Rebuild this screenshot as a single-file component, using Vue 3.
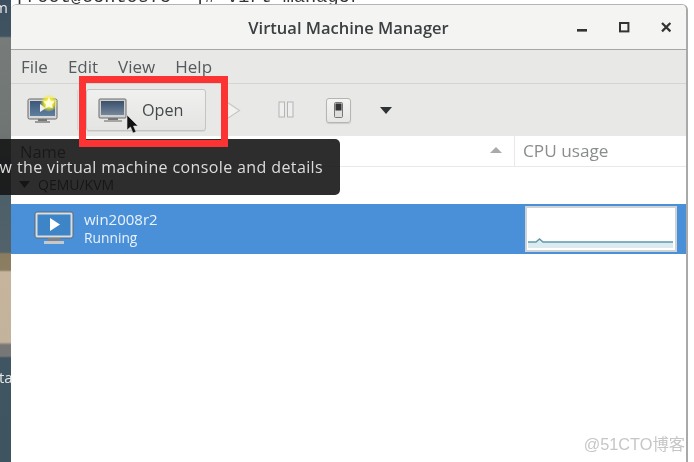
<script setup>
const menus = ['File', 'Edit', 'View', 'Help']
</script>

<template>
  <div class="desktop">
    <aside class="wallpaper">
      <span class="desk-label top">m</span>
      <span class="desk-label bottom">ta</span>
    </aside>
    <main class="center">
      <div class="terminal"><span>[root@centos75 ~]# virt-manager</span></div>
      <section class="window">
        <header class="titlebar">
          <span class="title">Virtual Machine Manager</span>
          <div class="controls">
            <svg width="12" height="12" viewBox="0 0 12 12"><rect x="1" y="8" width="10" height="2.6" fill="#333" /></svg>
            <svg width="12" height="12" viewBox="0 0 12 12"><rect x="2" y="2" width="8.4" height="8.4" fill="none" stroke="#333" stroke-width="2" /></svg>
            <svg width="12" height="12" viewBox="0 0 12 12"><path d="M2 2l8.4 8.4M10.4 2L2 10.4" stroke="#333" stroke-width="2.2" /></svg>
          </div>
        </header>
        <nav class="menubar">
          <span v-for="m in menus" :key="m">{{ m }}</span>
        </nav>
        <div class="toolbar">
          <svg class="new-icon" width="32" height="30" viewBox="0 0 32 30">
            <defs>
              <linearGradient id="scr1" x1="0" y1="0" x2="0" y2="1">
                <stop offset="0" stop-color="#3d5878" />
                <stop offset="1" stop-color="#5f7f9e" />
              </linearGradient>
              <radialGradient id="glow">
                <stop offset="0.45" stop-color="#f4ee30" />
                <stop offset="1" stop-color="#f4ee30" stop-opacity="0" />
              </radialGradient>
            </defs>
            <rect x="1" y="5" width="29" height="20" rx="1.5" fill="#d6d6d6" stroke="#666" />
            <rect x="3" y="7" width="25" height="15" fill="url(#scr1)" />
            <path d="M13 10l6 4-6 4z" fill="#eef" />
            <rect x="11" y="25" width="9" height="2" fill="#777" />
            <rect x="8" y="27" width="15" height="2" fill="#999" />
            <circle cx="22" cy="9" r="9" fill="url(#glow)" />
            <path d="M22 3l1.8 3.9 4.2.5-3.1 2.9.8 4.2-3.700-2.100-3.700 2.100.8-4.200-3.100-2.900 4.200-.5z" fill="#fffde0" />
          </svg>
          <i class="separator"></i>
          <button class="open-btn">
            <svg width="30" height="25" viewBox="0 0 30 25">
              <defs>
                <linearGradient id="scr2" x1="0" y1="0" x2="0" y2="1">
                  <stop offset="0" stop-color="#3a4f6b" />
                  <stop offset="1" stop-color="#74879c" />
                </linearGradient>
              </defs>
              <rect x="1" y="1" width="27" height="19" rx="1" fill="#d0d0d0" stroke="#6a6a6a" />
              <rect x="3" y="3" width="23" height="14" fill="url(#scr2)" />
              <rect x="10" y="20" width="10" height="2" fill="#777" />
              <rect x="6" y="22" width="18" height="2" fill="#a5a5a5" />
            </svg>
            <span>Open</span>
          </button>
          <svg class="play" width="15" height="19" viewBox="0 0 15 19"><path d="M1.5 1.5L13.5 9.5 1.5 17.5z" fill="#f1f1f0" stroke="#c6c6c6" stroke-width="1.2" /></svg>
          <svg class="pause" width="16" height="17" viewBox="0 0 16 17">
            <rect x="1" y="1" width="5.5" height="15" fill="#eee" stroke="#b4b4b4" />
            <rect x="9.5" y="1" width="5.5" height="15" fill="#eee" stroke="#b4b4b4" />
          </svg>
          <div class="power">
            <svg width="9" height="16" viewBox="0 0 9 16">
              <rect x="0.5" y="0.5" width="8" height="15" rx="1" fill="#ddd" stroke="#777" />
              <rect x="1.5" y="1.5" width="6" height="7" fill="#333" />
            </svg>
          </div>
          <svg class="drop" width="12" height="7" viewBox="0 0 12 7"><path d="M0 0h12L6 7z" fill="#2e3436" /></svg>
        </div>
        <div class="listing">
          <div class="list-header">
            <div class="col-name">
              <span>Name</span>
              <svg width="12" height="6" viewBox="0 0 12 6"><path d="M6 0l6 6H0z" fill="#aaa" /></svg>
            </div>
            <div class="col-cpu">CPU usage</div>
          </div>
          <div class="group-row">
            <svg width="11" height="7" viewBox="0 0 11 7"><path d="M0 0h11L5.500 7z" fill="#111" /></svg>
            <span>QEMU/KVM</span>
          </div>
          <div class="vm-row">
            <svg class="vm-icon" width="40" height="36" viewBox="0 0 40 36">
              <rect x="1" y="1" width="38" height="26" rx="2" fill="#d8dde2" stroke="#5f6a72" />
              <rect x="3.500" y="3.500" width="33" height="21" fill="#3d85c6" />
              <path d="M16 7l10 6.500L16 20z" fill="#fff" />
              <rect x="14" y="27" width="12" height="3" fill="#7d8489" />
              <rect x="10" y="30" width="20" height="3" fill="#c4c8cb" />
            </svg>
            <div class="vm-text">
              <span class="vm-name">win2008r2</span>
              <span class="vm-state">Running</span>
            </div>
            <svg class="graph" width="152" height="46" viewBox="0 0 152 46">
              <rect x="1" y="1" width="150" height="44" fill="#fff" stroke="#cfd3d6" stroke-width="2" />
              <path d="M3 36h8l3.500-3 3.500 3h130v6H3z" fill="#dcebf0" />
              <path d="M3 36h8l3.500-3 3.500 3h130" fill="none" stroke="#5f99ad" stroke-width="1.500" />
            </svg>
          </div>
        </div>
      </section>
    </main>
    <div class="margin-right"></div>

    <div class="tooltip"><span>View the virtual machine console and details</span></div>
    <div class="highlight"></div>
    <svg class="cursor" width="14" height="21" viewBox="0 0 14 21">
      <path d="M1 1v15l3.500-3 2.500 6 3-1.200-2.500-5.800H12z" fill="#111" stroke="#ddd" stroke-width="0.600" />
    </svg>
    <div class="watermark">@51CTO博客</div>
  </div>
</template>

<style scoped>
.desktop {
  position: relative;
  display: flex;
  width: 694px;
  height: 462px;
  overflow: hidden;
  background: #fff;
  font-family: "Open Sans", "Noto Sans", sans-serif;
  filter: blur(0.5px);
}
.wallpaper {
  position: relative;
  width: 11px;
  flex: none;
  background: linear-gradient(
    180deg,
    #3b4f5e 0, #3f5361 36px,
    #777c7a 38px, #6f7573 132px,
    #4d5f68 195px, #51626b 252px,
    #8a7c5f 254px, #8c7e62 270px,
    #c6b49c 272px, #c4b39c 342px,
    #777 345px, #777 356px,
    #3f5561 358px, #3e5460 462px
  );
}
.desk-label {
  position: absolute;
  left: -6px;
  color: #e8e8e8;
  font-size: 15px;
  line-height: 18px;
}
.desk-label.top { top: -2px; }
.desk-label.bottom { top: 368px; left: -1px; }
.center {
  flex: 1;
  display: flex;
  flex-direction: column;
  min-width: 0;
}
.terminal {
  height: 4px;
  flex: none;
  overflow: hidden;
  display: flex;
  align-items: flex-end;
  padding-left: 4px;
  font-family: "Liberation Mono", monospace;
  font-size: 18.6px;
  color: #333;
  white-space: nowrap;
}
.terminal span { line-height: 12px; height: 12px; }
.window {
  flex: 1;
  display: flex;
  flex-direction: column;
  border-top: 1px solid #b4b4b4;
  border-right: 2px solid #a9a9a9;
  border-radius: 6px 6px 0 0;
  overflow: hidden;
  background: #fff;
}
.titlebar {
  position: relative;
  height: 44px;
  flex: none;
  display: flex;
  align-items: center;
  justify-content: center;
  background: #f4f4f3;
  border-bottom: 1px solid #a6a6a4;
}
.title {
  font-size: 16.5px;
  font-weight: 600;
  color: #3c4042;
  margin-top: 1px;
}
.controls {
  position: absolute;
  right: 14px;
  top: 16px;
  display: flex;
  gap: 30px;
}
.menubar {
  height: 33px;
  flex: none;
  display: flex;
  align-items: center;
  gap: 20px;
  padding-left: 10px;
  background: #e8e8e7;
  border-bottom: 1px solid #d4d4d2;
  font-size: 17px;
  color: #555a5c;
}
.toolbar {
  height: 52px;
  flex: none;
  display: flex;
  align-items: center;
  background: #e8e8e7;
  padding-left: 16px;
}
.new-icon { margin-top: -2px; }
.separator {
  width: 1px;
  height: 40px;
  margin: 0 8px 0 18px;
  background: #d6d6d4;
}
.open-btn {
  width: 120px;
  height: 42px;
  display: flex;
  align-items: center;
  padding: 0 0 0 11px;
  gap: 14px;
  border: 1px solid #c4c4c2;
  border-radius: 3px;
  background: linear-gradient(#f0f0ef, #e4e4e3);
  box-shadow: 0 1px 0 #d8d8d6;
  font-family: inherit;
  font-size: 16.200px;
  color: #444a4c;
}
.play { margin: 0 0 0 20px; }
.pause { margin: -1px 0 0 37px; }
.power {
  width: 25px;
  height: 25px;
  box-sizing: border-box;
  margin: 0 0 0 32px;
  display: flex;
  align-items: center;
  justify-content: center;
  border: 1px solid #b5b5b3;
  border-radius: 3px;
  background: linear-gradient(#f4f4f3, #e6e6e5);
  box-shadow: 0 1px 1px #ccc;
}
.drop { margin: 0 0 0 29px; }
.listing {
  flex: 1;
  background: #fff;
}
.list-header {
  display: flex;
  height: 30px;
  border-bottom: 1px solid #e9e9e9;
  font-size: 16.5px;
}
.col-name {
  width: 504px;
  flex: none;
  display: flex;
  align-items: center;
  justify-content: space-between;
  padding: 0 12px 0 9px;
  box-sizing: border-box;
  border-right: 1px solid #e9e9e9;
  color: #333;
}
.col-name svg { margin-top: -2px; }
.col-cpu {
  padding: 3px 0 0 8px;
  font-size: 17.200px;
  color: #8a8d8e;
}
.group-row {
  height: 35px;
  padding-bottom: 2px;
  display: flex;
  align-items: center;
  gap: 8px;
  padding-left: 8px;
  font-size: 14px;
  color: #111;
}
.vm-row {
  height: 50px;
  display: flex;
  align-items: center;
  padding-left: 23px;
  background: #4a90d9;
  color: #eaf2fb;
  position: relative;
}
.vm-icon { margin-top: -1px; }
.vm-text {
  display: flex;
  flex-direction: column;
  gap: 1px;
  margin: -2px 0 0 10px;
  line-height: 18px;
}
.vm-name { font-size: 15px; }
.vm-state { font-size: 13.800px; }
.graph { margin-left: auto; margin-right: 9px; }
.margin-right {
  width: 6px;
  flex: none;
}
.tooltip {
  position: absolute;
  left: -30px;
  top: 139px;
  width: 370px;
  height: 56px;
  box-sizing: border-box;
  padding-top: 17px;
  padding-right: 17px;
  text-align: right;
  border-radius: 5px;
  background: rgba(22, 22, 22, 0.9);
  color: #dcdcdc;
  font-size: 16px;
  letter-spacing: 0.38px;
  line-height: 22px;
  white-space: nowrap;
}
.highlight {
  position: absolute;
  left: 79px;
  top: 76px;
  width: 149px;
  height: 71px;
  box-sizing: border-box;
  border: 7px solid #fb3333;
}
.cursor {
  position: absolute;
  left: 126px;
  top: 114px;
}
.watermark {
  position: absolute;
  right: 9px;
  top: 435px;
  font-family: "Liberation Sans", "Noto Sans CJK SC", sans-serif;
  font-size: 16.300px;
  line-height: 18px;
  color: #c6c6c6;
}
</style>
